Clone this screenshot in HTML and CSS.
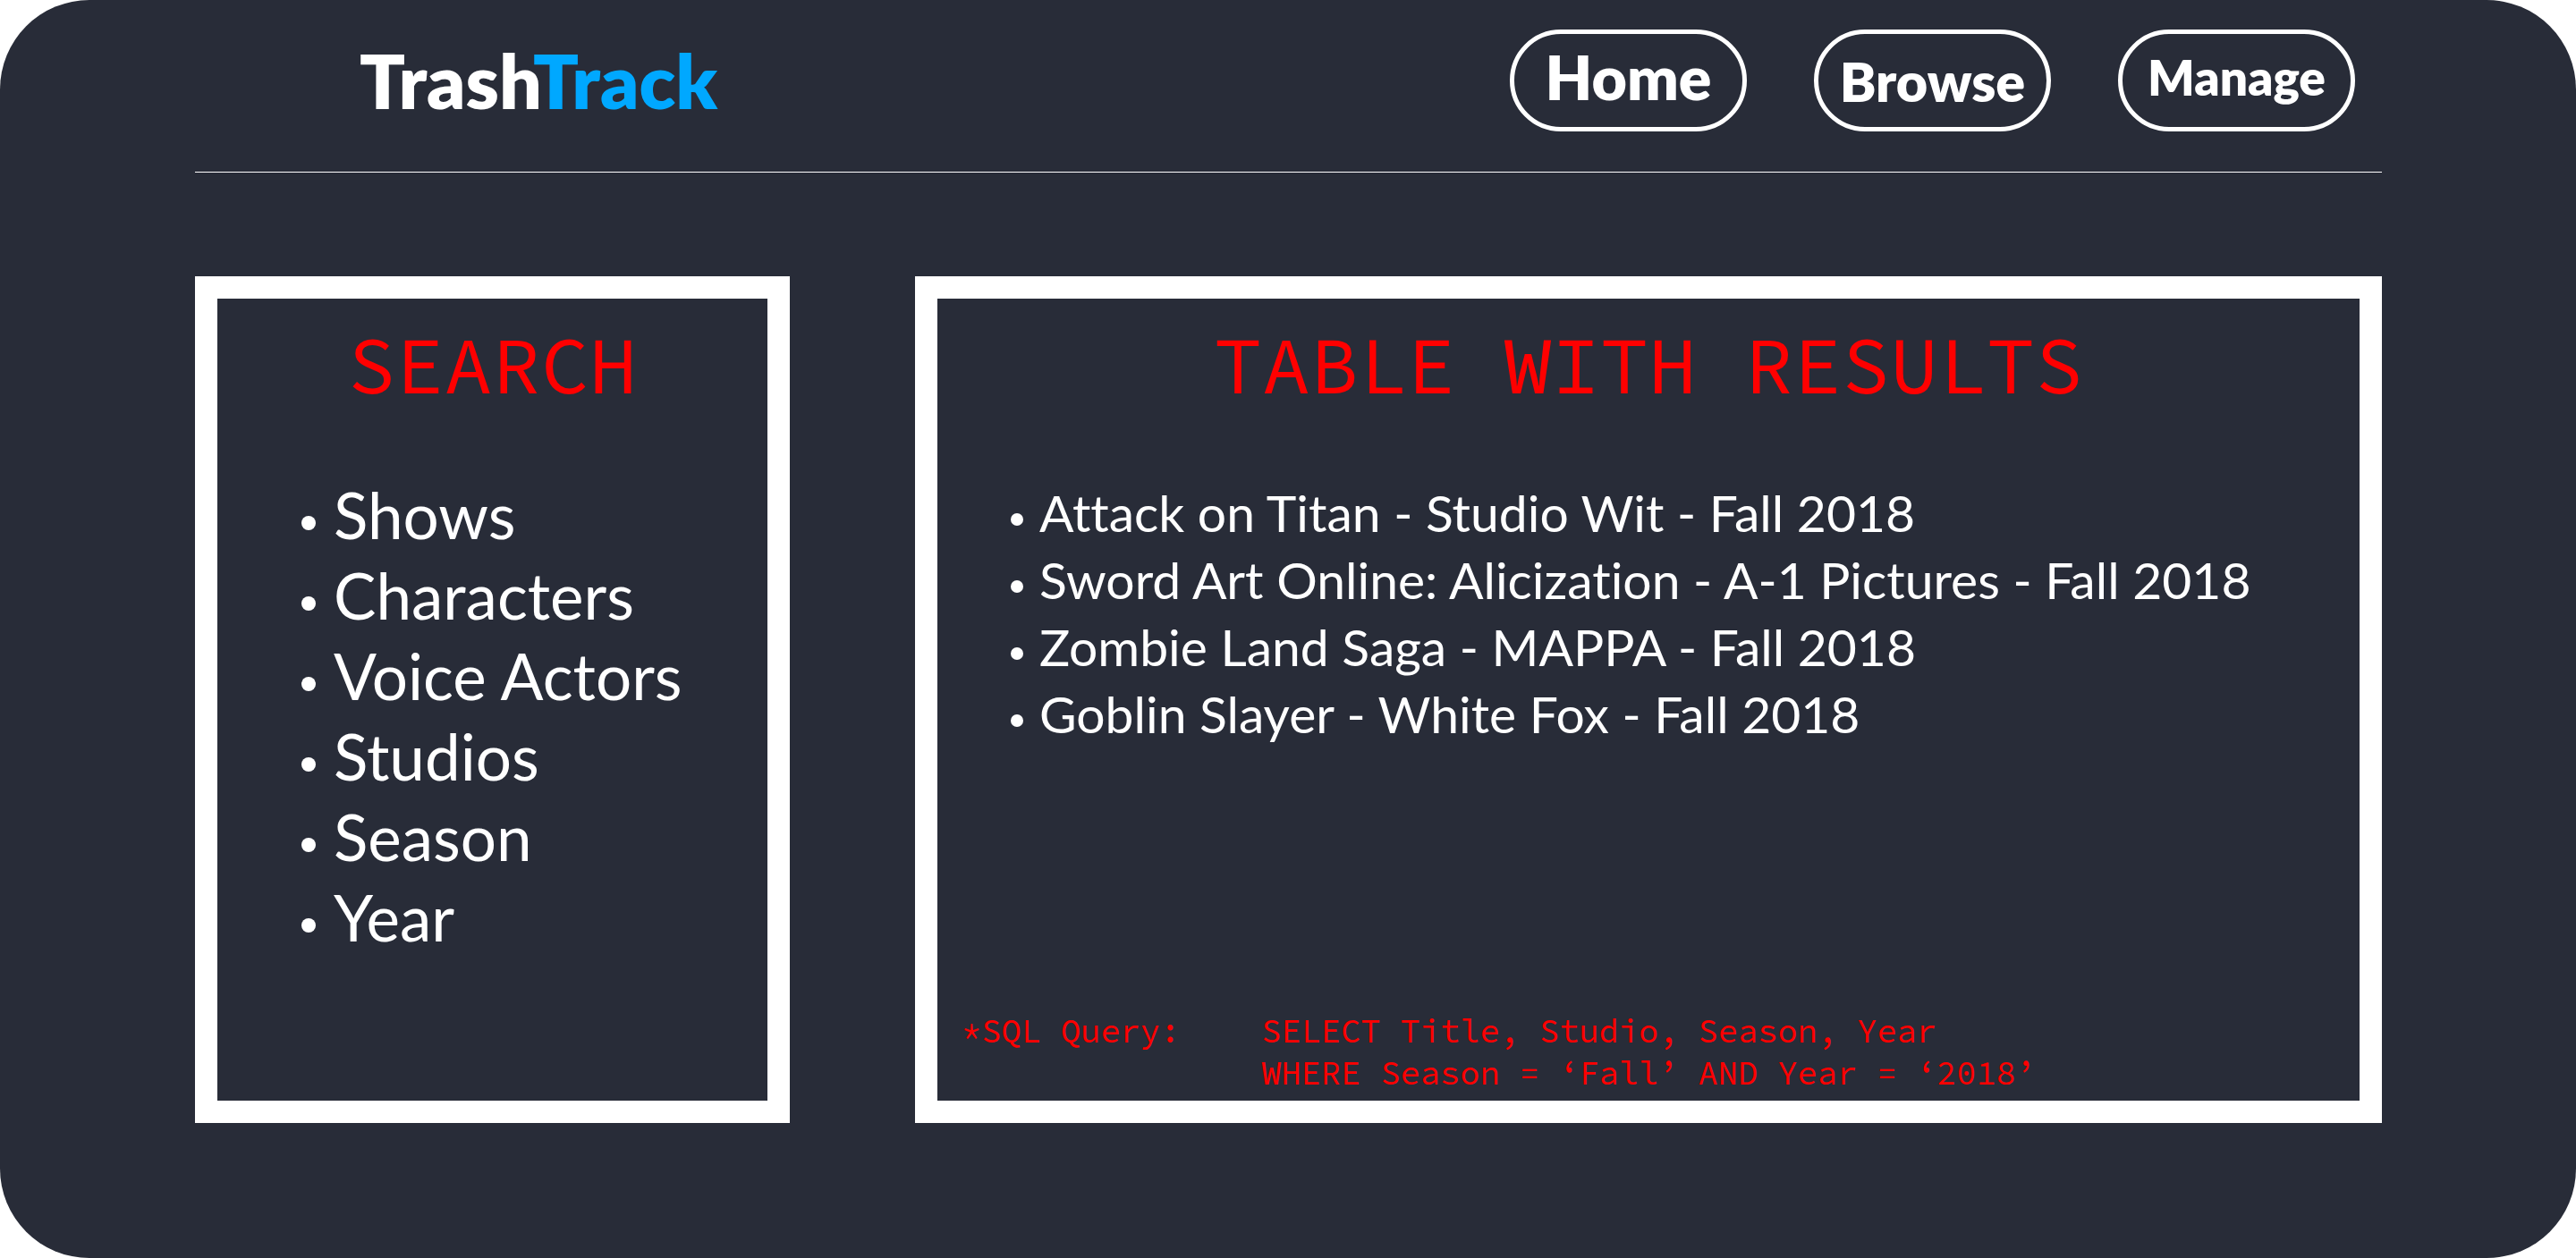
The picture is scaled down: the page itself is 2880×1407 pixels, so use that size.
FILE: index.html
```html
<!DOCTYPE html>
<html lang="en">
<head>
  <meta charset="utf-8">
  <meta name="viewport" content="width=device-width, initial-scale=1">
  <title>TrashTrack</title>
  <link rel="stylesheet" href="styles.css">
</head>
<body>
  <div class="app">
    <header class="header">
      <h1 class="logo"><span>Trash</span><span class="logo-accent">Track</span></h1>
      <nav class="nav">
        <a class="nav-link nav-link-home" href="#home">Home</a>
        <a class="nav-link nav-link-browse" href="#browse">Browse</a>
        <a class="nav-link nav-link-manage" href="#manage">Manage</a>
      </nav>
    </header>
    <main class="main">
      <section class="panel">
        <h2 class="panel-title">SEARCH</h2>
        <ul class="list list-search">
          <li>Shows</li>
          <li>Characters</li>
          <li>Voice Actors</li>
          <li>Studios</li>
          <li>Season</li>
          <li>Year</li>
        </ul>
      </section>
      <section class="panel">
        <h2 class="panel-title">TABLE WITH RESULTS</h2>
        <ul class="list list-results">
          <li>Attack on Titan - Studio Wit - Fall 2018</li>
          <li>Sword Art Online: Alicization - A-1 Pictures - Fall 2018</li>
          <li>Zombie Land Saga - MAPPA - Fall 2018</li>
          <li>Goblin Slayer - White Fox - Fall 2018</li>
        </ul>
        <div class="query">
          <span>*SQL Query:</span>
          <code class="query-code">SELECT Title, Studio, Season, Year<br>WHERE Season = ‘Fall’ AND Year = ‘2018’</code>
        </div>
      </section>
    </main>
  </div>
</body>
</html>
```
FILE: styles.css
```css
* {
  box-sizing: border-box;
  margin: 0;
  padding: 0;
}

body {
  background: #fff;
  color: #fff;
  font-family: Lato, "Liberation Sans", sans-serif;
  font-variant-ligatures: none;
}

.app {
  display: flex;
  flex-direction: column;
  min-height: 100vh;
  padding: 0 217px 151px 218px;
  border-radius: 100px;
  background: #282c38;
}

.header {
  display: flex;
  align-items: center;
  justify-content: space-between;
  padding: 33px 30px 45px 184px;
  border-bottom: 1px solid #fff;
}

.logo {
  font-size: 84px;
  font-weight: 800;
  line-height: 100px;
}

.logo-accent {
  color: #00a8ff;
}

.nav {
  display: flex;
  gap: 75px;
}

.nav-link {
  display: flex;
  align-items: center;
  justify-content: center;
  width: 265px;
  height: 114px;
  border: 5px solid #fff;
  border-radius: 57px;
  color: inherit;
  font-weight: 800;
  text-decoration: none;
}

.nav-link-home {
  padding-bottom: 10px;
  font-size: 68px;
}

.nav-link-browse {
  font-size: 61px;
}

.nav-link-manage {
  padding-bottom: 8px;
  font-size: 55px;
}

.main {
  display: grid;
  flex: 1;
  grid-template-columns: 665fr 1640fr;
  gap: 140px;
  margin-top: 116px;
}

.panel {
  display: flex;
  flex-direction: column;
  border: 25px solid #fff;
}

.panel-title {
  padding-top: 16px;
  color: #f00;
  font: 400 90px/116px "Source Code Pro", "Liberation Mono", monospace;
  text-align: center;
}

.list {
  list-style: none;
}

.list li {
  display: flex;
  align-items: center;
}

.list li::before {
  content: "";
  border-radius: 50%;
  background: #fff;
}

.list-search {
  padding: 65px 0 0 94px;
  font-size: 71px;
  line-height: 90px;
}

.list-search li::before {
  width: 16px;
  height: 16px;
  margin: 18px 20px 0 0;
}

.list-results {
  padding: 70px 0 0 82px;
  font-size: 57px;
  line-height: 75px;
}

.list-results li::before {
  width: 14px;
  height: 14px;
  margin: 14px 18px 0 0;
}

.query {
  display: flex;
  gap: 91px;
  margin-top: auto;
  padding: 0 0 7px 27px;
  color: #f00;
  font: 400 37px/47px "Source Code Pro", "Liberation Mono", monospace;
}

.query-code {
  font: inherit;
}
```
